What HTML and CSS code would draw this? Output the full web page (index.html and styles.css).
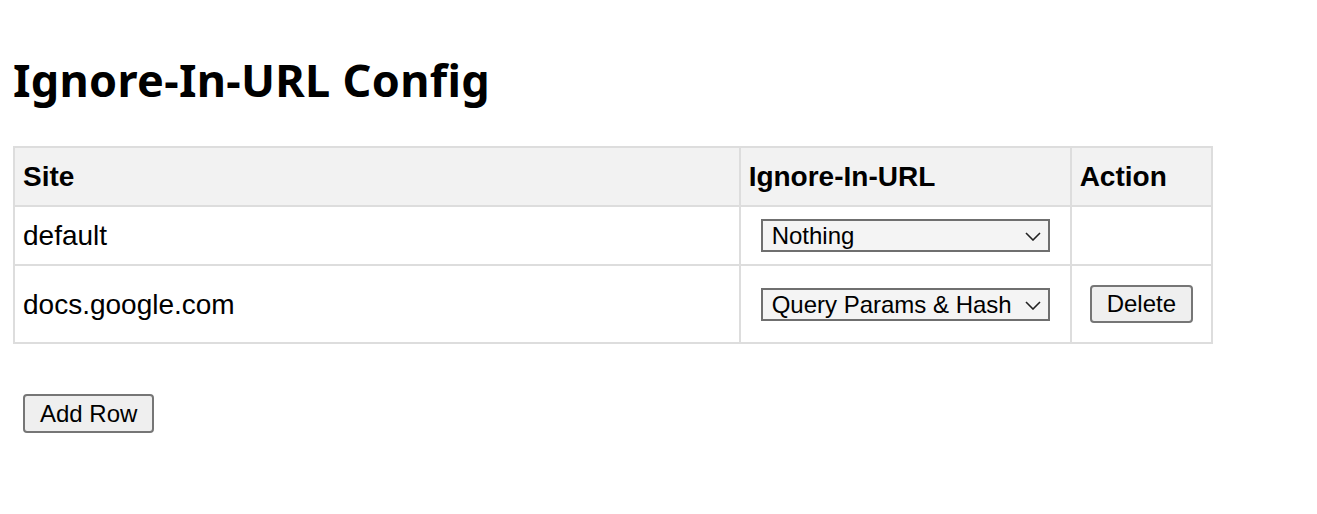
FILE: index.html
```html
<!DOCTYPE html>
<html>
<head>
<meta charset="utf-8">
<link rel="stylesheet" href="styles.css">
</head>
<body>
<h1 class="title">Ignore-In-URL Config</h1>
<table class="cfg">
  <thead>
    <tr><th class="c-site">Site</th><th class="c-ign">Ignore-In-URL</th><th class="c-act">Action</th></tr>
  </thead>
  <tbody>
    <tr>
      <td>default</td>
      <td class="cell-sel"><span class="sel"><select><option>Nothing</option><option>Query Params &amp; Hash</option></select><svg class="chev" width="16" height="9" viewBox="0 0 16 9"><path d="M1 1 L8 8 L15 1" fill="none" stroke="#222" stroke-width="1.6"/></svg></span></td>
      <td></td>
    </tr>
    <tr>
      <td>docs.google.com</td>
      <td class="cell-sel"><span class="sel"><select><option>Query Params &amp; Hash</option><option>Nothing</option></select><svg class="chev" width="16" height="9" viewBox="0 0 16 9"><path d="M1 1 L8 8 L15 1" fill="none" stroke="#222" stroke-width="1.6"/></svg></span></td>
      <td><button class="btn btn-row">Delete</button></td>
    </tr>
  </tbody>
</table>
<div class="actions"><button class="btn">Add Row</button></div>
</body>
</html>
```
FILE: styles.css
```css
html, body { background: #fff; }
body {
  margin: 0;
  padding: 0 13px;
  font-family: "Liberation Sans", Arial, sans-serif;
  color: #000;
}
.title {
  font-family: "Noto Sans", "Open Sans", sans-serif;
  font-weight: 700;
  font-size: 45px;
  line-height: 54px;
  letter-spacing: 0.3px;
  margin: 53px 0 39px 0;
}
.cfg {
  border-collapse: collapse;
  width: 1200px;
  font-size: 28px;
}
.cfg th, .cfg td {
  border: 2px solid #dddddd;
  padding: 12px 8px;
  line-height: 33px;
  text-align: left;
  vertical-align: middle;
}
.cfg th { background: #f2f2f2; font-weight: 700; }
.c-site { width: 709px; }
.c-ign { width: 313px; }
.c-act { width: 123px; }
.sel {
  position: relative;
  display: block;
  width: 289px;
  margin: 0 12px;
}
.sel select {
  -webkit-appearance: none;
  appearance: none;
  display: block;
  width: 289px;
  height: 33px;
  box-sizing: border-box;
  border: 2px solid #6f6f6f;
  border-radius: 0;
  background: #f4f4f4;
  font-family: "Liberation Sans", Arial, sans-serif;
  font-size: 24px;
  color: #000;
  padding: 0 24px 0 9px;
  margin: 0;
}
.chev {
  position: absolute;
  right: 9px;
  top: 13px;
  pointer-events: none;
}
.btn {
  font-family: "Liberation Sans", Arial, sans-serif;
  font-size: 24px;
  color: #000;
  background: #efefef;
  border: 2px solid #767676;
  border-radius: 4px;
  height: 39px;
  padding: 0 15px;
  margin: 0;
}
.btn-row { margin: 7px 10px; height: 38px; display: block; }
.actions { padding: 50px 10px 0; }
```
